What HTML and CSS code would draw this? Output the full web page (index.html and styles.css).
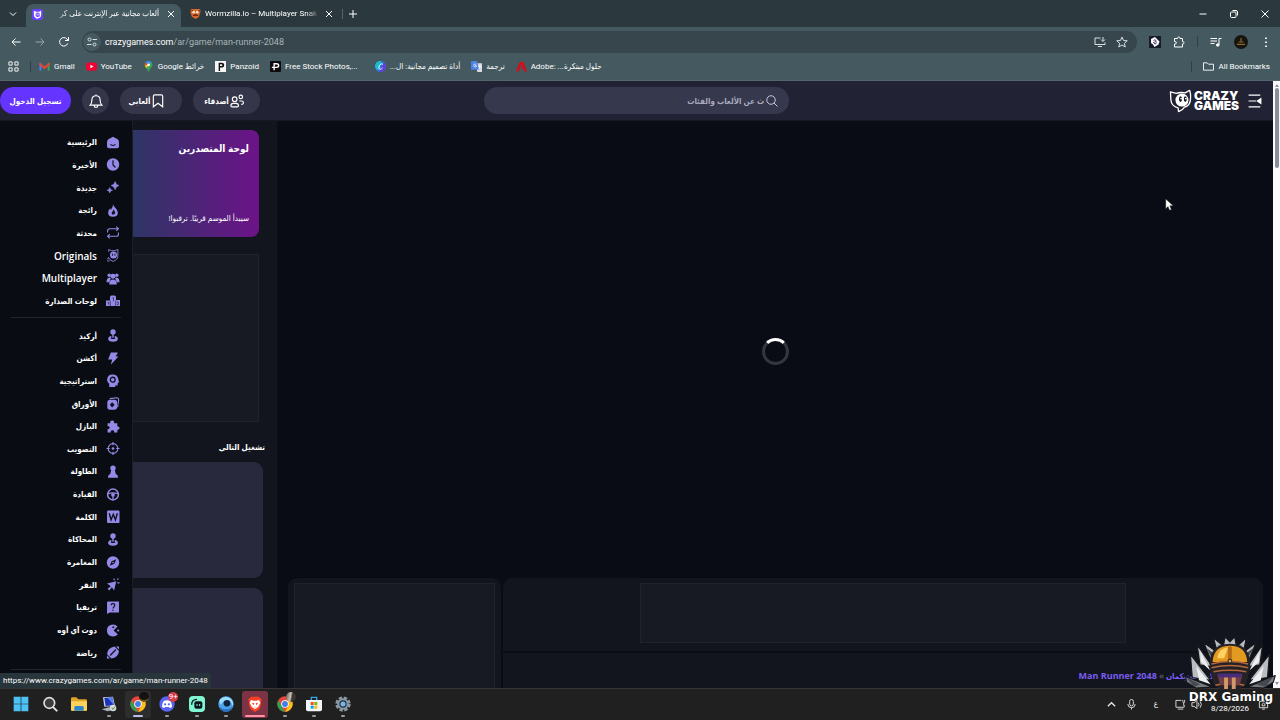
FILE: index.html
```html
<!DOCTYPE html>
<html lang="ar">
<head>
    <meta charset="UTF-8" />
    <meta name="viewport" content="width=device-width, initial-scale=1" />
    <title>ألعاب مجانية عبر الإنترنت على كريزي جيمز</title>
    <link rel="stylesheet" href="styles.css">
</head>
<body>

    <svg class="sprite" aria-hidden="true">
        <symbol id="i-cat" viewBox="0 0 24 24">
            <path d="M1.500 2.500L7.500 4Q12 2.500 17 3.500L21.500.8Q23 5 22.500 9 22.500 16.500 16 18.500q-1.500 3-6 4.700l-.5-4Q2.500 17.500 2 11z" fill="none" stroke="currentColor" stroke-width="1.400" stroke-linejoin="round" />
            <circle cx="13.500" cy="11" r="6.800" fill="currentColor" />
            <ellipse cx="12" cy="10" rx="1.600" ry="3" class="hole" />
            <ellipse cx="17" cy="10" rx="1.500" ry="3" class="hole" />
            <circle cx="12.600" cy="9.500" r=".9" fill="currentColor" />
            <circle cx="17.500" cy="9.500" r=".9" fill="currentColor" />
        </symbol>
        <symbol id="i-home" viewBox="0 0 24 24"><path d="M12 1.500L3.500 6Q1 8 1 11v8q0 3.500 3.500 3.500h15Q23 22.500 23 19v-8q0-3-2.500-5z" fill="currentColor" /><path d="M8 16q4 3 8 0" class="cut" stroke-width="2" stroke-linecap="round" /></symbol>
        <symbol id="i-clock" viewBox="0 0 24 24"><circle cx="12" cy="12" r="11.500" fill="currentColor" /><path d="M12 4v9l4.500 4.500" class="cut" stroke-width="2.200" /></symbol>
        <symbol id="i-sparkle" viewBox="0 0 24 24"><path d="M16 1l2 5 5 2.500-5 2.500-2 5-2.500-5-5-2.500 5-2.500zM6 12l1.500 3.500L11 17l-3.500 1.500L6 22l-1.500-3.500L1 17l3.500-1.500z" fill="currentColor" stroke="currentColor" /></symbol>
        <symbol id="i-fire" viewBox="0 0 24 24"><path d="M12 .5Q13 5 17 8q4 4 4 8 0 7.500-9 7.500T3 16q0-5 4-8l1 3q4-4 4-10.500z" fill="currentColor" /><path d="M12.500 10q0 3-2.500 5-1.500 4 2.500 4.500 4-.5 3.500-4Q15.500 12.500 12.500 10z" class="hole" /></symbol>
        <symbol id="i-loop" viewBox="0 0 24 24"><path d="M2 12V9q0-4 4-4h16M18 1l4 4-4 4M22 12v3q0 4-4 4H2M6 15l-4 4 4 4" fill="none" stroke="currentColor" stroke-width="2" /></symbol>
        <symbol id="i-original" viewBox="0 0 24 24"><path d="M4 5V1l5 2h6l6-2v12q0 7-9 10Q5 20 3.500 15M1 22h5M1 18h3" fill="none" stroke="currentColor" stroke-width="1.600" /><circle cx="13" cy="11" r="6.500" fill="currentColor" /><path d="M11 8.500v4M15.500 8.500v4" class="cut" stroke-width="1.800" /></symbol>
        <symbol id="i-people" viewBox="0 0 24 24"><circle cx="5" cy="6" r="3.200" fill="currentColor" /><circle cx="19" cy="6" r="3.200" fill="currentColor" /><path d="M0 19q0-8 5-9 2 0 3 2l-3 7zM24 19q0-8-5-9-2 0-3 2l3 7z" fill="currentColor" /><circle cx="12" cy="8" r="4.600" fill="currentColor" /><path d="M5 23q0-9 7-9t7 9z" fill="currentColor" /></symbol>
        <symbol id="i-podium" viewBox="0 0 28 24"><path d="M0 12h8V5q0-3 3-3h6q3 0 3 3v6h8v12H0z" fill="currentColor" /><path d="M13 6.500h2v7M3 16h2v4M22 15h2.500v5H22M8.500 13v10M19.500 12v11" class="cut" stroke-width="1.200" /></symbol>
        <symbol id="i-joystick" viewBox="0 0 24 24"><circle cx="12" cy="5.500" r="5" fill="currentColor" /><path d="M10.700 9h2.600v7h-2.600z" fill="currentColor" /><path d="M9 13q-6 1-6 5 0 5.500 9 5.500t9-5.500q0-4-6-5v2.500q2 .8 1 2-4 2-8 0-1-1.200 1-2z" fill="currentColor" /></symbol>
        <symbol id="i-bolt" viewBox="0 0 24 24"><path d="M8 1h13l-4 7.500h5L8 23.500l2.500-9.500H3z" fill="currentColor" /></symbol>
        <symbol id="i-head" viewBox="0 0 24 24"><path d="M11 1q10 0 11 10l1 4q-1 2-2.500 2v4H16v3H5v-6Q1 15 1 10.500 2 1 11 1z" fill="currentColor" /><circle cx="11.500" cy="10.500" r="4.500" class="cut" stroke-width="2.400" /><circle cx="11.500" cy="10.500" r="1.200" fill="currentColor" /></symbol>
        <symbol id="i-cards" viewBox="0 0 24 24"><path d="M6 3L19 1.500q3.500 0 3.500 3.500L20.500 19" fill="none" stroke="currentColor" stroke-width="2" /><rect x="1.500" y="5" width="18" height="18.500" rx="5" fill="currentColor" /><path d="M10.500 9.500l4.500 5-4.500 5-4.500-5z" class="hole" /></symbol>
        <symbol id="i-puzzle" viewBox="0 0 24 24"><path d="M2 6h5q-1-5 3.500-5T14 6h6v6q4-1 4 2.800T20 18v5h-6q1-4-3-4t-3 4H2v-6q4 0 4-3T2 11z" fill="currentColor" /></symbol>
        <symbol id="i-target" viewBox="0 0 24 24"><circle cx="12" cy="12" r="9" fill="none" stroke="currentColor" stroke-width="2" /><circle cx="12" cy="12" r="2.500" fill="currentColor" /><path d="M12 0v6M12 18v6M0 12h6M18 12h6" stroke="currentColor" stroke-width="2" /></symbol>
        <symbol id="i-pawn" viewBox="0 0 24 24"><path d="M12 1q5 0 5 5 0 2-1.500 3.500L17 16l4 4v3.500H3V20l4-4 1.500-6.500Q7 8 7 6q0-5 5-5z" fill="currentColor" /></symbol>
        <symbol id="i-wheel" viewBox="0 0 24 24"><circle cx="12" cy="12" r="10" fill="none" stroke="currentColor" stroke-width="2.800" /><path d="M2 11q10-4 20 0M12 12v10" fill="none" stroke="currentColor" stroke-width="2.400" /><circle cx="12" cy="12.500" r="3.500" fill="currentColor" /></symbol>
        <symbol id="i-word" viewBox="0 0 24 24"><rect x="1" y="1" width="23" height="23" rx="2" fill="currentColor" /><path d="M5 6l3.500 12L12.500 8l4 10L20 6" class="cut" stroke-width="2.600" /></symbol>
        <symbol id="i-compass" viewBox="0 0 24 24"><circle cx="12" cy="12" r="11.500" fill="currentColor" /><path d="M18 6l-3.500 8.500L6 18l3.500-8.500z" class="hole" /><circle cx="12" cy="12" r="1.500" fill="currentColor" /></symbol>
        <symbol id="i-click" viewBox="0 0 24 24"><path d="M1 10l17-4-4 17-4-6-5 6-3-3 6-5z" fill="currentColor" /><path d="M14 1v3M20 3l2-2M20 9h4" stroke="currentColor" stroke-width="2.200" /></symbol>
        <symbol id="i-trivia" viewBox="0 0 24 24"><path d="M3 1h20v20H6l-5 3V3q0-2 2-2z" fill="currentColor" /><path d="M8.500 8q0-3 3.500-3t3.500 3q0 1.500-2 3-1.500 1-1.500 3M12 16v2.500" class="cut" stroke-width="2.200" /></symbol>
        <symbol id="i-pac" viewBox="0 0 24 24"><path d="M20.500 4.500Q17 .8 12 .8.800 1.500.8 12T12 23.200q5.500 0 9-4.200l-8-7z" fill="currentColor" /><circle cx="12.500" cy="6" r="1.800" class="hole" /><circle cx="21.500" cy="12" r="2" fill="currentColor" /></symbol>
        <symbol id="i-ball" viewBox="0 0 24 24"><path d="M1 15Q2 3 15 1l8 8Q22 21 9 23z" fill="currentColor" /><path d="M17.500.8L23 .8v5.500zM.8 17.500V23h5.500z" fill="currentColor" /><path d="M7.500 16.500l9-9" class="cut" stroke-width="2.400" stroke-linecap="round" /></symbol>

        <symbol id="i-chrome" viewBox="0 0 24 24"><circle cx="12" cy="12" r="11.500" fill="#e8453c" /><path d="M2 6.300l5 8.600L12 23.500A11.500 11.500 0 0 1 2 6.300z" fill="#2ba24c" /><path d="M12 23.500l5-8.600 5-8.600A11.500 11.500 0 0 1 12 23.500z" fill="#fbc116" /><path d="M12 6.500h10l-5 8.500z" fill="#fbc116" /><circle cx="12" cy="12" r="5.700" fill="#fff" /><circle cx="12" cy="12" r="4.400" fill="#3f7fe8" /></symbol>
    </svg>

    <header class="browser">
        <div class="tabs">
            <button class="tab-search" aria-label="Search tabs"><svg viewBox="0 0 10 10"><path d="M2 3.500l3 3 3-3" /></svg></button>
            <div class="tab active">
                <svg class="favicon" viewBox="0 0 24 24"><rect width="24" height="24" rx="5" fill="#6842ff" /><path d="M4 4l5 2h7l4-3v9q0 7-6 8l-4 2v-2q-6-1-6-8z" fill="#fff" /><circle cx="12.500" cy="12.500" r="5" fill="#6842ff" /><path d="M11 10v4M15 10v4" stroke="#fff" stroke-width="2" /></svg>
                <span class="tab-title" dir="rtl">ألعاب مجانية عبر الإنترنت على كر</span>
                <button aria-label="Close tab"><svg viewBox="0 0 10 10"><path d="M2 2l6 6M8 2l-6 6" /></svg></button>
            </div>
            <div class="tab">
                <svg class="favicon" viewBox="0 0 24 24"><path d="M2 2h20l1 6-4 12-7 4-8-5-3-9z" fill="#d9682b" /><path d="M2 3l8 4-3 4zM22 3l-6 4 3 5z" fill="#703018" /><circle cx="8" cy="9" r="3" fill="#f4e3cb" /><circle cx="16" cy="9" r="3" fill="#f4e3cb" /><path d="M7 17q5-4 10 0" stroke="#501c10" stroke-width="3" fill="none" /></svg>
                <span class="tab-title">Wormzilla.io – Multiplayer Snak</span>
                <button aria-label="Close tab"><svg viewBox="0 0 10 10"><path d="M2 2l6 6M8 2l-6 6" /></svg></button>
            </div>
            <button class="new-tab" aria-label="New tab"><svg viewBox="0 0 10 10"><path d="M5 1v8M1 5h8" /></svg></button>
            <div class="window-buttons">
                <button aria-label="Minimize"><svg viewBox="0 0 10 10"><path d="M1.500 5h7" /></svg></button>
                <button aria-label="Restore"><svg viewBox="0 0 10 10"><rect x="1.500" y="3" width="5.500" height="5.500" rx="1" /><path d="M3.500 1.500H7q1.500 0 1.500 1.500v3.500" /></svg></button>
                <button aria-label="Close"><svg viewBox="0 0 10 10"><path d="M1.500 1.500l7 7M8.500 1.500l-7 7" /></svg></button>
            </div>
        </div>

        <div class="toolbar">
            <button aria-label="Back"><svg viewBox="0 0 24 24"><path d="M21 12H4M11 5l-7 7 7 7" /></svg></button>
            <button class="dim" aria-label="Forward"><svg viewBox="0 0 24 24"><path d="M3 12h17M13 5l7 7-7 7" /></svg></button>
            <button aria-label="Reload"><svg viewBox="0 0 24 24"><path d="M19.500 15A8.500 8.500 0 1 1 18 6l3 3M21 2v7h-7" /></svg></button>
            <div class="omnibox">
                <button class="site-info" aria-label="Site information"><svg viewBox="0 0 24 24"><circle cx="7" cy="7" r="3" /><path d="M13 7h9M2 17h9" /><circle cx="17" cy="17" r="3" /></svg></button>
                <span class="url"><b>crazygames.com</b>/ar/game/man-runner-2048</span>
                <button aria-label="Install"><svg viewBox="0 0 24 24"><path d="M13 4H2v13h20v-4M8 21h8M18 2v8M14 7l4 4 4-4" /></svg></button>
                <button aria-label="Bookmark this page"><svg viewBox="0 0 24 24"><path d="M12 2l3 7 7.500.6-5.700 5 1.700 7.400-6.500-4-6.500 4 1.700-7.400-5.700-5L9 9z" /></svg></button>
            </div>
            <button aria-label="Extension"><svg viewBox="0 0 24 24"><rect width="24" height="24" fill="#161c2c" stroke="none" /><path d="M4 6l8-4 9 9-2 6-8 5-3-5-4-3z" fill="#fff" stroke="none" /><path d="M9 9q3-3 5 0t-3 3 1 4q3 0 3-3" stroke="#4a3a6c" /></svg></button>
            <button aria-label="Extensions"><svg viewBox="0 0 24 24"><path d="M3 5h6q0-3 2.500-3T14 5h5v6q3 0 3 2.500T19 16v6H3v-6q4 0 4-2.500T3 11z" /></svg></button>
            <i class="sep"></i>
            <button aria-label="Media"><svg viewBox="0 0 24 24"><path d="M1 5h13M1 10h13M1 15h8M18 18V5h5" /><circle cx="15.500" cy="18" r="2.500" fill="currentColor" /></svg></button>
            <button class="profile" aria-label="Profile"><svg viewBox="0 0 24 24"><circle cx="12" cy="12" r="12" fill="#16150f" stroke="none" /><path d="M12 5v6M8 12h8M5 16h14" stroke="#86692a" /></svg></button>
            <button aria-label="Menu"><svg viewBox="0 0 24 24"><path d="M12 3v3M12 11v3M12 19v3" stroke-width="3.500" /></svg></button>
        </div>

        <nav class="bookmarks">
            <button aria-label="Apps"><svg class="line" viewBox="0 0 24 24"><path d="M2 2h7v7H2zM15 2h7v7h-7zM2 15h7v7H2zM15 15h7v7h-7z" /></svg></button>
            <i class="sep"></i>
            <a href="#" class="first"><svg viewBox="0 0 24 24"><path d="M1 4h4v17H1z" fill="#4285f4" /><path d="M19 4h4v17h-4z" fill="#34a853" /><path d="M1 3l11 9 11-9v6l-11 9L1 9z" fill="#ea4335" /></svg>Gmail</a>
            <a href="#"><svg viewBox="0 0 24 24"><rect y="3" width="24" height="18" rx="5" fill="#f00033" /><path d="M9.500 8l7 4-7 4z" fill="#fff" /></svg>YouTube</a>
            <a href="#"><svg viewBox="0 0 24 24"><path d="M12 0a8.500 8.500 0 0 1 8.500 8.500Q20 13 15 18l-3 6-3-6Q4 13 3.500 8.500A8.500 8.500 0 0 1 12 0z" fill="#34a853" /><path d="M12 0a8.500 8.500 0 0 0-6.500 3L12 9l6-6.500Q16 0 12 0z" fill="#4285f4" /><path d="M5.500 3Q3 6 4 10l8-2z" fill="#ea4335" /><path d="M4 10l3 6 8-10z" fill="#fbbc04" /><circle cx="12" cy="8.500" r="3" fill="#fff" /></svg><span dir="rtl">خرائط Google</span></a>
            <a href="#"><svg viewBox="0 0 24 24"><rect width="24" height="24" fill="#f5f5f5" /><path d="M8 22V4h6q6 0 6 5t-6 5h-3v8z" fill="#111" /><path d="M11 7h3q2 0 2 2t-2 2h-3z" fill="#f5f5f5" /></svg>Panzoid</a>
            <a href="#"><svg viewBox="0 0 24 24"><rect width="24" height="24" rx="2" fill="#0c0c0e" /><path d="M9 20V6h5q5 0 5 4t-5 4H4" fill="none" stroke="#fff" stroke-width="3" /></svg>Free Stock Photos,...</a>
            <a href="#" class="spaced"><svg viewBox="0 0 24 24"><circle cx="12" cy="12" r="12" fill="#287be0" /><path d="M0 12A12 12 0 0 1 14 0L8 20Q1 18 0 12z" fill="#1bbccd" /><path d="M24 12a12 12 0 0 1-15 11.500L20 3q4 4 4 9z" fill="#683bd8" /><path d="M16.500 8q0-3-3-2-5 3-5 8 0 4 3 4 3-.5 5-3" fill="none" stroke="#fff" stroke-width="2" /></svg><span dir="rtl">أداة تصميم مجانية: ال...</span></a>
            <a href="#"><svg viewBox="0 0 24 24"><path d="M9 5h15v19H14z" fill="#d8dde2" /><path d="M0 0h13l5 19H0z" fill="#4e83e6" /><path d="M11 7q-5-2-5 2.500t4.500 3.500q2-.5 1.500-3H9M16 12h6M19 10v2q0 4-3 6" fill="none" stroke="#fff" stroke-width="1.600" /></svg><span dir="rtl">ترجمة</span></a>
            <a href="#"><svg viewBox="0 0 24 24"><path d="M0 23L8 2h8l8 21h-6l-3-7h-4l3-5 2 5-4-9-6 16z" fill="#d40e16" /></svg><span dir="rtl">حلول مبتكرة...&rlm; &lrm;Adobe:&lrm;</span></a>
            <i class="sep push"></i>
            <a href="#" class="all"><svg class="line" viewBox="0 0 24 24"><path d="M1 20V4h8l3 3h11v13z" /></svg>All Bookmarks</a>
        </nav>
    </header>

    <div class="page">
        <div class="site">
            <header class="site-header">
                <div class="account">
                    <button class="login">تسجيل الدخول</button>
                    <button class="pill bell" aria-label="الإشعارات"><svg viewBox="0 0 24 24"><path d="M2 19q3-3 3-9 0-7 7-7t7 7q0 6 3 9zM9 20q0 3 3 3t3-3M12 1v2" /></svg></button>
                    <button class="pill games">ألعابي<svg viewBox="0 0 24 24"><path d="M4 22V4q0-2.500 2.500-2.500h11Q20 1.500 20 4v18l-8-6z" /></svg></button>
                    <button class="pill friends">أصدقاء<svg viewBox="0 0 24 24"><circle cx="8" cy="9" r="4" /><circle cx="18.500" cy="5" r="3" /><path d="M1.500 20q0-4 4-4h5q4 0 4 4 0 2-2 2h-9q-2 0-2-2zM16 12h4q3 0 3 3t-4 2.500" /></svg></button>
                </div>
                <label class="search" dir="rtl">
                    <svg viewBox="0 0 24 24"><circle cx="10" cy="10" r="8.500" /><path d="M16 16l7 7" /></svg>
                    <input type="text" placeholder="ث عن الألعاب والفئات" aria-label="بحث">
                </label>
                <div class="brand">
                    <a href="#" class="logo"><svg viewBox="0 0 24 24"><use href="#i-cat" /></svg><span>CRAZY<br>GAMES</span></a>
                    <button aria-label="القائمة"><svg viewBox="0 0 24 24"><path d="M1 2h20M1 12h13M1 22h20" /><path d="M22 8v8l-6-4z" fill="currentColor" /></svg></button>
                </div>
            </header>

            <aside class="sidebar" dir="rtl">
                <ul class="links">
                    <li><a href="#"><svg><use href="#i-home" /></svg>الرئيسية</a></li>
                    <li><a href="#"><svg><use href="#i-clock" /></svg>الأخيرة</a></li>
                    <li><a href="#"><svg><use href="#i-sparkle" /></svg>جديدة</a></li>
                    <li><a href="#"><svg><use href="#i-fire" /></svg>رائجة</a></li>
                    <li><a href="#"><svg><use href="#i-loop" /></svg>محدثة</a></li>
                    <li><a href="#" class="latin"><svg><use href="#i-original" /></svg>Originals</a></li>
                    <li><a href="#" class="latin"><svg><use href="#i-people" /></svg>Multiplayer</a></li>
                    <li><a href="#"><svg><use href="#i-podium" /></svg>لوحات الصدارة</a></li>
                </ul>
                <ul class="links genres">
                    <li><a href="#"><svg><use href="#i-joystick" /></svg>أركيد</a></li>
                    <li><a href="#"><svg><use href="#i-bolt" /></svg>أكشن</a></li>
                    <li><a href="#"><svg><use href="#i-head" /></svg>استراتيجية</a></li>
                    <li><a href="#"><svg><use href="#i-cards" /></svg>الأوراق</a></li>
                    <li><a href="#"><svg><use href="#i-puzzle" /></svg>البازل</a></li>
                    <li><a href="#"><svg><use href="#i-target" /></svg>التصويب</a></li>
                    <li><a href="#"><svg><use href="#i-pawn" /></svg>الطاولة</a></li>
                    <li><a href="#"><svg><use href="#i-wheel" /></svg>القيادة</a></li>
                    <li><a href="#"><svg><use href="#i-word" /></svg>الكلمة</a></li>
                    <li><a href="#"><svg><use href="#i-joystick" /></svg>المحاكاة</a></li>
                    <li><a href="#"><svg><use href="#i-compass" /></svg>المغامرة</a></li>
                    <li><a href="#"><svg><use href="#i-click" /></svg>النقر</a></li>
                    <li><a href="#"><svg><use href="#i-trivia" /></svg>تريفيا</a></li>
                    <li><a href="#"><svg><use href="#i-pac" /></svg>دوت آي أوه</a></li>
                    <li><a href="#"><svg><use href="#i-ball" /></svg>رياضة</a></li>
                </ul>
            </aside>

            <section class="side-panel" dir="rtl">
                <div class="leaderboard">
                    <h2>لوحة المتصدرين</h2>
                    <p>سيبدأ الموسم قريبًا. ترقبوا!</p>
                </div>
                <div class="ad side-ad"></div>
                <h3>تشغيل التالي</h3>
                <div class="thumb"></div>
                <div class="thumb"></div>
            </section>

            <main class="game">
                <div class="stage"><div class="spinner"></div></div>
                <div class="below">
                    <div class="box square"><div class="ad"></div></div>
                    <div class="box info">
                        <div class="banner"><div class="ad"></div></div>
                        <nav class="crumbs" dir="rtl"><a href="#">ألعاب أولاد</a> » <a href="#">ستيكمان</a> » <a href="#" class="latin">Man Runner 2048</a></nav>
                    </div>
                </div>
            </main>
        </div>
        <div class="scrollbar"><i class="up"></i><div class="thumb-bar"></div><i class="down"></i></div>
        <div class="status">https://www.crazygames.com/ar/game/man-runner-2048</div>
        <svg class="cursor" viewBox="0 0 12 18"><path d="M1 1v13l3-3 2 5 2.500-1-2-5H11z" fill="#fff" stroke="#222" stroke-width=".6" /></svg>
    </div>

    <footer class="taskbar">
        <ul class="apps">
            <li><button aria-label="Start"><svg viewBox="0 0 24 24"><path d="M1 1h10.500v10.500H1zM12.500 1H23v10.500H12.500zM1 12.500h10.500V23H1zM12.500 12.500H23V23H12.500z" fill="#4cc2f4" /></svg></button></li>
            <li><button aria-label="Search"><svg viewBox="0 0 24 24"><circle cx="11" cy="10.500" r="8" fill="#3c3c3c" stroke="#e0e0e0" stroke-width="2.500" /><path d="M17 17l5 5" stroke="#e0e0e0" stroke-width="3" stroke-linecap="round" /></svg></button></li>
            <li><button aria-label="Explorer"><svg viewBox="0 0 24 24"><path d="M0 4q0-2 2-2h6l3 3h11q2 0 2 2v15H0z" fill="#e0a526" /><path d="M0 8h24v12q0 2-2 2H2q-2 0-2-2z" fill="#fbd35c" /><path d="M5 22v-5q0-2 2-2h10q2 0 2 2v5z" fill="#2d86cc" /></svg></button></li>
            <li class="open"><button aria-label="Remote desktop"><svg viewBox="0 0 24 24"><path d="M3 2l15-1 3 14-16 1z" fill="#c9d4e8" /><path d="M5 3l12-1 2.500 12L7 15z" fill="#1d32b8" /><path d="M10 3l7-1 2.500 12z" fill="#5a80ea" /><path d="M1 20l11-3 8 3-10 3z" fill="#aab1bf" /><circle cx="18" cy="18" r="5" fill="#d5dad4" /><path d="M16 18l2 2 3-4" fill="none" stroke="#4a854e" stroke-width="1.500" /></svg></button></li>
            <li class="open current"><button aria-label="Chrome"><svg viewBox="0 0 24 24"><use href="#i-chrome" /></svg><span class="avatar dark"></span></button></li>
            <li class="open"><button aria-label="Discord"><svg viewBox="0 0 24 24"><circle cx="12" cy="12" r="11.500" fill="#5865f2" /><path d="M7 7.500q5-2 10 0 3 5 2.500 9-2 1.500-3.500 1.500l-1-1.500H9L8 18q-1.500 0-3.500-1.500Q4 12.500 7 7.500z" fill="#fff" /><circle cx="9.200" cy="12.500" r="1.700" fill="#5865f2" /><circle cx="14.800" cy="12.500" r="1.700" fill="#5865f2" /></svg><span class="count">9+</span></button></li>
            <li class="open"><button aria-label="Streamlabs"><svg viewBox="0 0 24 24"><rect width="24" height="24" rx="6" fill="#80f5d2" /><rect x="8" y="8" width="12" height="11" rx="3" fill="#09161d" /><path d="M4 13q0-8 8-8" fill="none" stroke="#09161d" stroke-width="2" /><path d="M12 12v3M16 12v3" stroke="#80f5d2" stroke-width="1.500" /></svg></button></li>
            <li class="open"><button aria-label="Browser"><svg viewBox="0 0 24 24"><circle cx="12" cy="12" r="11.500" fill="#4ba3e8" /><path d="M3 5q9-8 17 0 4 6 2 10-2-8-9-8t-8 6Q1 11 3 5z" fill="#9bdcf9" /><circle cx="13.500" cy="11" r="5" fill="#12233f" /><path d="M2 16q9 8 20 0-3 7.500-10 7.500T2 16z" fill="#2b6fc6" /></svg></button></li>
            <li class="open alert"><button aria-label="Brave"><svg viewBox="0 0 24 24"><path d="M7 1h10l5 4-1 4 .5 3-3 8-6.500 4-6.500-4-3-8L3 9 2 5z" fill="#fb4226" /><path d="M6 6l4 1h4l4-1 2 4-3 6-5 4-5-4-3-6z" fill="#fff" /><path d="M7 10l4 1-1 3zM17 10l-4 1 1 3zM10 17l2-1 2 1" fill="#fb4226" /></svg></button></li>
            <li class="open"><button aria-label="Chrome profile"><svg viewBox="0 0 24 24"><use href="#i-chrome" /></svg><span class="avatar photo"></span></button></li>
            <li class="open"><button aria-label="Store"><svg viewBox="0 0 24 24"><path d="M8 7V2h8v5" fill="none" stroke="#32a5e2" stroke-width="2" /><path d="M0 6h24v14q0 3-3 3H3q-3 0-3-3z" fill="#f2f4f6" /><path d="M7 9h4.500v4.500H7z" fill="#f25022" /><path d="M12.500 9H17v4.500h-4.500z" fill="#7fba00" /><path d="M7 14.500h4.500V19H7z" fill="#00a4ef" /><path d="M12.500 14.500H17V19h-4.500z" fill="#ffb900" /></svg></button></li>
            <li class="open"><button aria-label="Settings"><svg viewBox="0 0 24 24"><circle cx="12" cy="12" r="9.500" fill="none" stroke="#8d98a3" stroke-width="4" stroke-dasharray="5 2.460" /><circle cx="12" cy="12" r="8.500" fill="#8d98a3" /><circle cx="12" cy="12" r="5.500" fill="#1d3142" /><circle cx="12" cy="12" r="3.800" fill="#74b7e8" /></svg></button></li>
        </ul>
        <div class="tray">
            <button aria-label="Show hidden icons"><svg viewBox="0 0 24 24"><path d="M4 16l8-8 8 8" stroke-width="3" /></svg></button>
            <button aria-label="Microphone"><svg viewBox="0 0 24 24"><rect x="8" y="1" width="8" height="14" rx="4" /><path d="M4 11q0 8 8 8t8-8M12 19v4" /></svg></button>
            <span class="lang">ع</span>
            <button class="net" aria-label="Network"><svg viewBox="0 0 24 24"><path d="M14 3H2v15h18v-5M6 22h12M17 2v4q0 2 2 2t2-2V2M19 8v6" /></svg><svg viewBox="0 0 24 24"><path d="M2 8h5l6-5v18l-6-5H2zM16 8q3 4 0 8M20 5q5 7 0 14" /></svg></button>
            <time>8/28/2026</time>
            <button aria-label="Notifications"><svg viewBox="0 0 24 24"><path d="M3 19V5h12M21 10v9H3M9 22h6M9 15v-4q3-4 6 0v4zM17 3h5l-5 5h5" /></svg></button>
        </div>
    </footer>

    <div class="watermark">
        <svg viewBox="0 0 106 56">
            <g fill="#b9bcc1" stroke="#17181b" stroke-width="1.200" stroke-linejoin="round">
                <path d="M36 24L29 7l14 10zM43 17L39 2l12 10zM49 12l2-11 5 5 5-5 2 11zM62 12L73 2l-3 15zM70 17l13-10-7 17z" />
                <path d="M38 32L22 9l3 21zM74 32L90 9l-3 21zM36 46L15 19l2 24zM76 46l21-27-2 24z" />
                <path d="M38 53L10 42l1 6 10 6zM74 53l29-12-2 7-10 6z" fill="#767a82" />
            </g>
            <path d="M36 50L21 31l3 15zM76 50l15-19-3 15zM36 36L25 15l1 12zM76 36l11-21-1 12z" fill="#eceef0" />
            <path d="M11 43l14 7-6 3zM101 42l-18 8 10 3zM31 12l6 10 2-4zM81 12l-6 10-2-4z" fill="#46494f" />
            <path d="M35 34q-2-26 21-26t21 26l-4 16-8 6H47l-8-6z" fill="#242127" />
            <path d="M38 27q1-17 18-17t18 17z" fill="#e39a20" />
            <path d="M43 23q1-10 11-11l-4 11z" fill="#ffd064" />
            <path d="M54 11h4v15h-4z" fill="#b56a18" />
            <path d="M37 29q19-5 38 0M37 33q19-5 38 0M39 37q17-3 34 0M41 51q15-4 30 0" fill="none" stroke="#b5683a" stroke-width="1.600" />
            <path d="M43 40h26l-3 11H46z" fill="#733d48" />
            <path d="M43 39h26l-2 4H45z" fill="#4a2c7a" />
            <path d="M50 43h4v12h-4zM58 43h4v12h-4z" fill="#d19968" />
            <circle cx="56" cy="26" r="2" fill="#d9a44a" stroke="#242127" />
        </svg>
        <strong>DRX Gaming</strong>
    </div>

</body>
</html>
```
FILE: styles.css
```css
:root {
    --strip: #2b383e;
    --chrome: #455a60;
    --omnibox: #37464c;
    --bg: #090c14;
    --panel: #12151d;
    --ad: #171923;
    --line: #20232d;
    --header: #212233;
    --pill: #35364a;
    --icon: #9489e6;
    --purple: #6534ff;
    --ui: Roboto, "DejaVu Sans Condensed", "DejaVu Sans", sans-serif;
    --site: "Open Sans", "DejaVu Sans Condensed", "DejaVu Sans", sans-serif;
}

* {
    box-sizing: border-box;
    margin: 0;
    padding: 0;
}

body {
    height: 100vh;
    display: grid;
    grid-template-rows: auto 1fr auto;
    background: var(--bg);
    color: #fff;
    font: 8px/12px var(--ui);
    overflow: hidden;
    position: relative;
}

button {
    border: none;
    background: none;
    color: inherit;
    font: inherit;
    display: flex;
    align-items: center;
    justify-content: center;
}

a {
    color: inherit;
    text-decoration: none;
}

ul {
    list-style: none;
}

svg {
    display: block;
    flex-shrink: 0;
}

.sprite {
    position: absolute;
    width: 0;
    height: 0;
}

.cut {
    fill: none;
    stroke: #11131f;
}

.hole {
    fill: #11131f;
}

/* browser window */

.browser button svg,
.line {
    fill: none;
    stroke: currentColor;
    stroke-width: 2;
}

.tabs {
    height: 27px;
    display: flex;
    align-items: center;
    background: var(--strip);
}

    .tabs button svg {
        width: 10px;
        height: 10px;
        stroke-width: 1;
    }

.tab-search {
    width: 26px;
}

.tab {
    display: flex;
    align-items: center;
    gap: 4px;
    width: 158px;
    height: 23px;
    padding: 0 5px 0 9px;
}

    .tab.active {
        width: 155px;
        align-self: flex-end;
        padding: 0 5px 3px 6px;
        border-radius: 8px 8px 0 0;
        background: var(--chrome);
    }

    .tab .favicon {
        width: 11px;
        height: 11px;
    }

.tab-title {
    flex: 1;
    white-space: nowrap;
    -webkit-mask-image: linear-gradient(90deg, #000 88%, transparent);
    mask-image: linear-gradient(90deg, #000 88%, transparent);
}

    .tab-title[dir="rtl"] {
        -webkit-mask-image: linear-gradient(270deg, #000 80%, transparent);
        mask-image: linear-gradient(270deg, #000 80%, transparent);
        padding-right: 3px;
    }

.new-tab {
    margin-left: 3px;
    padding-left: 5px;
    border-left: 1px solid #52656b;
}

.window-buttons {
    display: flex;
    gap: 21px;
    margin-left: auto;
    padding-right: 10px;
}

.toolbar {
    height: 28px;
    display: flex;
    align-items: center;
    gap: 12px;
    padding: 1px 8px 0 10px;
    background: var(--chrome);
}

    .toolbar svg {
        width: 12px;
        height: 12px;
    }

    .toolbar .profile svg {
        width: 14px;
        height: 14px;
    }

.dim {
    opacity: .45;
}

.sep {
    width: 1px;
    height: 11px;
    background: #2f4046;
}

.omnibox {
    flex: 1;
    height: 22px;
    display: flex;
    align-items: center;
    gap: 10px;
    padding: 0 9px 0 1px;
    border-radius: 11px;
    background: var(--omnibox);
    color: #d8e0e2;
}

    .omnibox .site-info {
        width: 18px;
        height: 18px;
        margin-right: -6px;
        border-radius: 50%;
        background: var(--chrome);
    }

.url {
    flex: 1;
    font-size: 9px;
    color: #a9b5b8;
}

    .url b {
        font-weight: 400;
        color: #fff;
    }

.bookmarks {
    height: 26px;
    display: flex;
    align-items: center;
    gap: 11px;
    padding: 0 10px 2px 8px;
    background: var(--chrome);
    border-bottom: 1px solid #54666c;
    white-space: nowrap;
}

    .bookmarks a {
        display: flex;
        align-items: center;
        gap: 4px;
    }

    .bookmarks .first {
        margin-left: -3px;
    }

    .bookmarks svg {
        width: 11px;
        height: 11px;
    }

    .bookmarks .spaced {
        margin-left: 6px;
    }

    .bookmarks .push {
        margin-left: auto;
    }

/* site */

.page {
    position: relative;
    display: flex;
    min-height: 0;
}

.site {
    flex: 1;
    display: grid;
    grid-template-columns: 133px 145px 1fr;
    grid-template-rows: 40px 1fr;
    min-height: 0;
    font-family: var(--site);
}

.site-header {
    grid-column: 1 / -1;
    display: grid;
    grid-template-columns: 1fr 24% 1fr;
    align-items: center;
    background: var(--header);
    border-bottom: 1px solid #161824;
    font-weight: 700;
}

    .site-header button svg,
    .search svg {
        fill: none;
        stroke: currentColor;
        stroke-width: 2;
    }

.account {
    display: flex;
    gap: 11px;
}

.login,
.pill {
    height: 27px;
    border-radius: 14px;
    background: var(--pill);
}

.login {
    width: 71px;
    background: var(--purple);
}

.bell {
    width: 27px;
}

.pill svg {
    width: 14px;
    height: 14px;
}

.games,
.friends {
    gap: 1px;
    width: 62px;
    padding-right: 8px;
}

.friends {
    width: 67px;
    padding-right: 5px;
}

.search {
    display: flex;
    align-items: center;
    gap: 2px;
    height: 27px;
    padding: 0 11px;
    border-radius: 14px;
    background: #36384e;
    color: #c7c8d8;
}

    .search svg {
        width: 12px;
        height: 12px;
    }

    .search input {
        flex: 1;
        min-width: 0;
        border: none;
        outline: none;
        background: none;
        color: inherit;
        font: 700 8px/12px var(--site);
    }

        .search input::placeholder {
            color: #a9aabd;
        }

.brand {
    display: flex;
    justify-content: flex-end;
    align-items: center;
    gap: 9px;
    padding-right: 11px;
}

    .brand button svg {
        width: 14px;
        height: 14px;
    }

.logo {
    display: flex;
    align-items: center;
    gap: 2px;
    font: 900 12px/10px Inter, sans-serif;
}

    .logo svg {
        width: 23px;
        height: 24px;
    }

.sidebar {
    display: flex;
    flex-direction: column;
    padding: 10px 11px 18px;
    border-right: 1px solid #1b1e27;
    background: #090c13;
}

.links {
    flex: 8;
    display: flex;
    flex-direction: column;
}

.genres {
    flex: 15;
    margin-top: 5px;
    padding: 6px 0 5px;
    border-top: 1px solid #22252c;
    border-bottom: 1px solid #22252c;
}

.links li {
    flex: 1;
    display: flex;
    align-items: center;
    padding-right: 1px;
}

.links a {
    display: flex;
    align-items: center;
    gap: 9px;
    font-weight: 700;
}

.links .latin {
    font-size: 10px;
    font-weight: 600;
}

.links svg {
    width: 14px;
    height: 13px;
    color: var(--icon);
}

.side-panel {
    padding: 9px 14px 0 0;
    background: var(--panel);
    border-right: 1px solid #0c0f16;
    overflow: hidden;
}

.leaderboard {
    display: flex;
    flex-direction: column;
    justify-content: space-between;
    height: 107px;
    margin-right: 4px;
    padding: 12px 10px 13px 0;
    border-radius: 0 8px 8px 0;
    background: linear-gradient(90deg, #2e3565, #6c1389);
}

    .leaderboard h2 {
        font-size: 10px;
        line-height: 12px;
    }

.ad {
    border: 1px solid var(--line);
    background: var(--ad);
}

.side-ad {
    height: 168px;
    margin: 17px 4px 19px 0;
    border-left: none;
}

.side-panel h3 {
    font-size: 8px;
    line-height: 12px;
    margin: 0 -2px 9px 0;
}

.thumb {
    height: 116px;
    margin-bottom: 10px;
    border-radius: 0 9px 9px 0;
    background: #28293c;
}

.game {
    display: grid;
    grid-template-rows: 1fr 110px;
    min-height: 0;
}

.stage {
    display: grid;
    place-items: center;
    padding-top: 4px;
}

.spinner {
    width: 27px;
    height: 27px;
    border: 3px solid #34363f;
    border-top-color: #fff;
    border-radius: 50%;
}

.below {
    display: flex;
    gap: 2px;
    padding: 0 10px;
}

.box {
    background: var(--panel);
    border-radius: 9px 9px 0 0;
}

.square {
    width: 213px;
    padding: 5px 6px 0;
}

    .square .ad {
        height: 100%;
        border-bottom: none;
    }

.info {
    flex: 1;
}

.banner {
    padding: 5px 0 8px;
    border-bottom: 2px solid #0b0e15;
}

    .banner .ad {
        width: 64%;
        height: 60px;
        margin: 0 auto;
    }

.crumbs {
    padding: 17px 20px 0 0;
    font-weight: 700;
    color: #55566a;
}

    .crumbs a {
        color: #7a5cf2;
    }

    .crumbs .latin {
        font-size: 9px;
    }

.scrollbar {
    width: 7px;
    display: flex;
    flex-direction: column;
    align-items: center;
    padding: 3px 0;
    background: #fbfbfc;
}

.thumb-bar {
    width: 4px;
    height: 80px;
    margin-top: 1px;
    border-radius: 2px;
    background: #8b8d9b;
}

.up,
.down {
    border: 2px solid transparent;
    border-top: none;
    border-bottom: 3px solid #8b8d9b;
}

.down {
    margin-top: auto;
    transform: rotate(180deg);
}

.status {
    position: absolute;
    left: 0;
    bottom: 0;
    padding: 2px 3px 1px;
    border-radius: 0 3px 0 0;
    background: #28353a;
}

.cursor {
    position: absolute;
    left: 91%;
    top: 117px;
    width: 9px;
    height: 14px;
}

/* taskbar */

.taskbar {
    height: 32px;
    display: flex;
    align-items: center;
    justify-content: space-between;
    padding: 0 11px 1px 6px;
    background: #202020;
    border-top: 1px solid #393336;
}

.apps {
    display: flex;
    width: 352px;
}

    .apps li {
        flex: 1;
        display: flex;
        flex-direction: column;
        align-items: center;
    }

    .apps button {
        position: relative;
        width: 26px;
        height: 27px;
        border-radius: 3px;
    }

    .apps svg {
        width: 16px;
        height: 16px;
    }

    .apps .open button::after {
        content: "";
        position: absolute;
        bottom: 1px;
        width: 4px;
        height: 2px;
        border-radius: 1px;
        background: #9a9a9a;
    }

    .apps .current button {
        background: #2d2d2d;
    }

    .apps .current button::after {
        width: 10px;
        background: #b5bfe8;
    }

    .apps .alert button {
        background: #7c3444;
    }

    .apps .alert button::after {
        width: 20px;
        background: #ff92a5;
    }

.avatar,
.count {
    position: absolute;
    top: 1px;
    right: 2px;
    width: 10px;
    height: 10px;
    border-radius: 50%;
}

.dark {
    background: #15130d;
    border-bottom: 2px solid #66542a;
}

.photo {
    background: linear-gradient(100deg, #5a5148, #c9c4bb 45%, #3a3430 60%);
}

.count {
    background: #d83b4c;
    line-height: 10px;
}

.tray {
    display: flex;
    align-items: center;
    gap: 9px;
}

    .tray svg {
        width: 11px;
        height: 11px;
        fill: none;
        stroke: #e2e2e2;
        stroke-width: 2;
    }

    .tray .lang {
        padding: 0 8px;
    }

    .tray .net {
        gap: 5px;
    }

    .tray time {
        padding-top: 10px;
    }

/* channel mark over the corner of the screen */

.watermark {
    position: absolute;
    right: 0;
    bottom: 16px;
    width: 106px;
    display: flex;
    flex-direction: column;
    align-items: center;
}

    .watermark svg {
        width: 106px;
        height: 54px;
    }

    .watermark strong {
        padding-left: 8px;
        font: 700 12px/14px "DejaVu Sans", sans-serif;
        white-space: nowrap;
        text-shadow: 0 0 1px #000;
    }
```
